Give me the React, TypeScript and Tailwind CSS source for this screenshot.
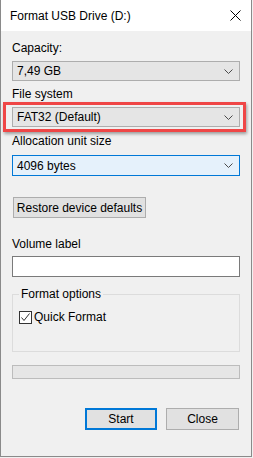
import React from "react";

const Chevron = () => (
  <svg width="9" height="5" viewBox="0 0 9 5" className="block">
    <polyline points="0.5,0.5 4.5,4.5 8.5,0.5" fill="none" stroke="#4a4a4a" strokeWidth="1" />
  </svg>
);

const Combo = ({ text, focused }: { text: string; focused?: boolean }) => (
  <div
    className={
      focused
        ? "flex h-[21px] items-center justify-between border border-[#0078d7] bg-[#e5f1fb] pl-[4px] pr-[6px]"
        : "flex h-[20px] items-center justify-between border border-[#adadad] bg-[#e5e5e5] pl-[4px] pr-[6px]"
    }
  >
    <span>{text}</span>
    <Chevron />
  </div>
);

export default function App() {
  return (
    <div
      className="relative h-[458px] w-[253px] bg-[#f0f0f0] text-[12px] leading-[16px] text-black"
      style={{ fontFamily: '"Liberation Sans", Arial, sans-serif' }}
    >
      <div className="flex h-[457px] w-[252px] flex-col border-x border-b border-[#8a8a8a] bg-[#f0f0f0]">
        {/* Title bar */}
        <div className="flex h-[31px] items-center justify-between bg-white pl-[9px] pr-[10px]">
          <span className="text-[12px]">Format USB Drive (D:)</span>
          <svg width="11" height="11" viewBox="0 0 11 11">
            <path d="M0.5 0.5 L10.5 10.5 M10.5 0.5 L0.5 10.5" stroke="#000" strokeWidth="1" />
          </svg>
        </div>

        <div className="flex flex-col px-[11px]">
          <div className="mt-[9px]">Capacity:</div>
          <div className="mt-[5px]">
            <Combo text="7,49 GB" />
          </div>

          <div className="mt-[5px]">File system</div>
          <div className="mt-[5px]">
            <Combo text="FAT32 (Default)" />
          </div>

          <div className="mt-[6px]">Allocation unit size</div>
          <div className="mt-[6px]">
            <Combo text="4096 bytes" focused />
          </div>

          <div className="mt-[21px] flex">
            <button className="ml-[1px] h-[21px] w-[133px] border border-[#adadad] bg-[#e1e1e1] text-[12px]">
              Restore device defaults
            </button>
          </div>

          <div className="mt-[18px]">Volume label</div>
          <div className="mt-[4px] h-[21px] border border-[#7a7a7a] bg-white" />

          {/* Format options group */}
          <div className="relative mt-[17px] h-[58px] border border-[#dcdcdc]">
            <div className="absolute left-[6px] top-[-9px] bg-[#f0f0f0] px-[2px]">Format options</div>
            <div className="ml-[6px] mt-[14px] flex items-center gap-[2px]">
              <div className="flex h-[13px] w-[13px] items-center justify-center border border-[#333] bg-white">
                <svg width="11" height="11" viewBox="0 0 11 11">
                  <polyline points="1.5,5.5 4,8.5 9.5,1.5" fill="none" stroke="#333" strokeWidth="1" />
                </svg>
              </div>
              <span>Quick Format</span>
            </div>
          </div>

          <div className="mt-[13px] h-[14px] border border-[#bcbcbc] bg-[#e6e6e6]" />

          <div className="mt-[29px] flex justify-end gap-[9px] pr-[1px]">
            <button className="h-[22px] w-[72px] border-2 border-[#0078d7] bg-[#e1e1e1] text-[12px]">Start</button>
            <button className="h-[22px] w-[73px] border border-[#adadad] bg-[#e1e1e1] text-[12px]">Close</button>
          </div>
        </div>
      </div>

      {/* Red annotation rectangle */}
      <div className="pointer-events-none absolute left-[3px] top-[102px] h-[30px] w-[243px] border-[3px] border-[#ef4646] shadow-[1px_2px_3px_rgba(0,0,0,0.35)]" />
    </div>
  );
}
